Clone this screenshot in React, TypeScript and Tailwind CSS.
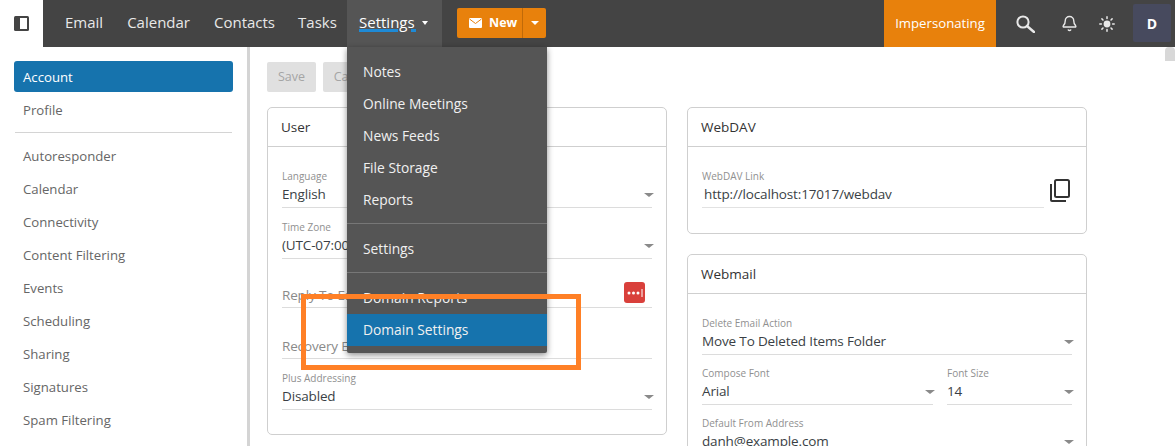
import React from "react";
import { Bell } from "lucide-react";

const font = "font-['Open_Sans','Noto_Sans',sans-serif]";

const sideTop = ["Autoresponder", "Calendar", "Connectivity", "Content Filtering", "Events", "Scheduling", "Sharing", "Signatures", "Spam Filtering"];

const Caret = () => <span className="absolute right-[-2px] top-[25px] h-0 w-0 border-x-[5px] border-t-[4px] border-x-transparent border-t-[#8a8a8a]" />;

const Field = ({ label, value, select = true, className = "" }: { label: string; value: string; select?: boolean; className?: string }) => (
  <div className={`relative h-[40px] border-b border-[#dcdcdc] ${className}`}>
    <div className="h-[15px] text-[10px] leading-[17px] text-[#909090]">{label}</div>
    <div className="h-[24px] whitespace-nowrap text-[13.5px] leading-[22px] tracking-[-0.15px] text-[#3a3f45]">{value}</div>
    {select && <Caret />}
  </div>
);

const Empty = ({ label, className = "" }: { label: string; className?: string }) => (
  <div className={`h-[29px] border-b border-[#dcdcdc] pt-[5px] text-[13.5px] leading-[22px] tracking-[-0.15px] text-[#8a8a8a] ${className}`}>{label}</div>
);

const Card = ({ title, children, className = "" }: { title: string; children: React.ReactNode; className?: string }) => (
  <section className={`rounded-[5px] border border-[#cfcfcf] bg-white ${className}`}>
    <h3 className="h-[39px] border-b border-[#cfcfcf] px-[13px] text-[13.5px] font-normal leading-[38px] text-[#333]">{title}</h3>
    {children}
  </section>
);

const MenuItem = ({ label, active = false }: { label: string; active?: boolean }) => (
  <div className={`h-[32px] px-[16px] text-[13.8px] font-medium leading-[31px] text-[#f0f0f0] ${active ? "bg-[#1673ad]" : ""}`}>{label}</div>
);

export default function App() {
  return (
    <div className={`relative h-[446px] w-[1175px] overflow-hidden bg-white ${font}`}>
      {/* top bar */}
      <header className="flex h-[47px] items-stretch bg-[#444444]">
        <div className="flex w-[43px] items-center justify-center bg-white">
          <svg width="15" height="15" viewBox="0 0 15 15">
            <rect x="0" y="0" width="15" height="15" rx="1.5" fill="#444" />
            <rect x="6" y="2" width="7" height="11" fill="#fff" />
          </svg>
        </div>
        <nav className="flex pl-[22px] text-[15px] text-[#e8e8e8]">
          <span className="mr-[24px] leading-[45px]">Email</span>
          <span className="mr-[24px] leading-[45px]">Calendar</span>
          <span className="mr-[23px] leading-[45px]">Contacts</span>
          <span className="mr-[10px] w-[39px] leading-[45px]">Tasks</span>
          <div className="flex w-[95px] bg-[#555555] pl-[12px]">
            <span className="relative h-[32px] leading-[45px] text-white">
              Settings
              <span className="absolute left-0 top-[29px] h-[3px] w-[39px] bg-[#1e8ad6]" />
              <span className="absolute left-[52px] top-[29px] h-[3px] w-[5px] bg-[#1e8ad6]" />
            </span>
            <span className="ml-[7px] mt-[21px] h-0 w-0 border-x-[3.5px] border-t-[4px] border-x-transparent border-t-white" />
          </div>
        </nav>
        <div className="ml-[15px] mt-[8px] flex h-[30px] w-[89px] rounded-[2px] bg-[#e8810c] text-white">
          <div className="flex w-[65px] items-center pl-[12px] text-[12.5px] font-bold">
            <svg width="13" height="10" viewBox="0 0 13 10" className="mr-[7px] shrink-0">
              <rect width="13" height="10" rx="1" fill="#fff" />
              <path d="M0.5 1 6.5 5.5 12.5 1" fill="none" stroke="#e8810c" strokeWidth="1" />
            </svg>
            New
          </div>
          <div className="flex flex-1 items-center justify-center border-l border-[#c06a08]">
            <span className="h-0 w-0 border-x-[4px] border-t-[4px] border-x-transparent border-t-white" />
          </div>
        </div>
        <div className="ml-auto flex items-stretch">
          <div className="flex w-[112px] items-center justify-center bg-[#e8810c] text-[13.2px] text-white">Impersonating</div>
          <div className="flex w-[58px] items-center justify-center">
            <svg width="19" height="18" viewBox="0 0 19 18" fill="none" stroke="#e8e8e8">
              <circle cx="7" cy="7" r="5.6" strokeWidth="2" />
              <path d="M11 11l7 6" strokeWidth="2.4" strokeLinecap="round" />
            </svg>
          </div>
          <div className="flex w-[30px] items-center justify-center text-[#e8e8e8]">
            <Bell size={17} strokeWidth={2} />
          </div>
          <div className="flex w-[45px] items-center justify-center">
            <svg width="16" height="16" viewBox="0 0 16 16" stroke="#e8e8e8" strokeWidth="1.5" strokeLinecap="round">
              <circle cx="8" cy="8" r="3.4" fill="#e8e8e8" stroke="none" />
              <path d="M8 .8v1.6M8 13.6v1.6M.8 8h1.6M13.6 8h1.6M2.9 2.9 4 4M12 12l1.1 1.1M2.9 13.1 4 12M12 4l1.1-1.1" />
            </svg>
          </div>
          <div className="mx-[4px] mb-[5px] mt-[4px] flex w-[38px] items-center justify-center rounded-[2px] bg-[#474a5e] text-[14px] font-bold text-white">D</div>
        </div>
      </header>

      <div className="flex h-[399px]">
        {/* sidebar */}
        <aside className="w-[247px] shrink-0 px-[14px] pt-[14px]">
          <div className="h-[31px] rounded-[3px] bg-[#1673ad] px-[9px] text-[13.2px] leading-[33px] text-white">Account</div>
          <div className="mb-[7px] h-[33px] px-[9px] text-[13.2px] leading-[37px] text-[#666]">Profile</div>
          <div className="mx-[1px] mb-[7px] border-t border-[#d4d4d4]" />
          {sideTop.map((s) => (
            <div key={s} className="h-[33px] px-[9px] text-[13.2px] leading-[33px] text-[#666]">{s}</div>
          ))}
        </aside>
        <div className="w-[3px] shrink-0 bg-[#d4d4d4]" />

        {/* main */}
        <main className="flex-1 pl-[17px] pt-[15px]">
          <div className="mb-[15px] flex gap-[7px]">
            <div className="h-[30px] w-[49px] rounded-[2px] bg-[#e0e0e0] text-center text-[12.5px] leading-[30px] text-[#a5a5a5]">Save</div>
            <div className="h-[30px] w-[60px] rounded-[2px] bg-[#e0e0e0] text-center text-[12.5px] leading-[30px] text-[#a5a5a5]">Cancel</div>
          </div>
          <div className="grid grid-cols-[400px_400px] gap-x-[20px]">
            <Card title="User" className="h-[328px]">
              <div className="px-[14px] pt-[21px]">
                <Field label="Language" value="English" />
                <Field label="Time Zone" value="(UTC-07:00) Mountain Time" className="mt-[11px]" />
                <Empty label="Reply To Email" className="mt-[20px]" />
                <Empty label="Recovery Email" className="mt-[22px]" />
                <Field label="Plus Addressing" value="Disabled" className="mt-[11px]" />
              </div>
            </Card>
            <div>
              <Card title="WebDAV" className="h-[127px]">
                <div className="flex px-[14px] pt-[21px]">
                  <div className="h-[40px] w-[342px] border-b border-[#e2e2e2]">
                    <div className="h-[15px] text-[10px] leading-[17px] text-[#909090]">WebDAV Link</div>
                    <div className="pl-[2px] text-[13.5px] leading-[22px] tracking-[-0.15px] text-[#3a3f45]">http://localhost:17017/webdav</div>
                  </div>
                  <svg width="22" height="25" viewBox="0 0 22 25" className="ml-[5px] mt-[10px]" fill="none" stroke="#333" strokeWidth="2">
                    <rect x="6" y="2" width="14" height="17" rx="1.5" />
                    <path d="M2 6v16a1 1 0 0 0 1 1h14" />
                  </svg>
                </div>
              </Card>
              <Card title="Webmail" className="mt-[20px] h-[300px]">
                <div className="px-[14px] pt-[21px]">
                  <Field label="Delete Email Action" value="Move To Deleted Items Folder" />
                  <div className="mt-[10px] flex gap-[14px]">
                    <Field label="Compose Font" value="Arial" className="w-[231px]" />
                    <Field label="Font Size" value="14" className="w-[125px]" />
                  </div>
                  <Field label="Default From Address" value="danh@example.com" className="mt-[10px]" />
                </div>
              </Card>
            </div>
          </div>
        </main>
      </div>

      {/* red password manager badge */}
      <div className="absolute left-[624px] top-[282px] flex h-[21px] w-[21px] items-center justify-center rounded-[3px] bg-[#d9403b]">
        <svg width="16" height="8" viewBox="0 0 16 8" fill="#fff">
          <circle cx="2" cy="4" r="1.5" />
          <circle cx="6.5" cy="4" r="1.5" />
          <circle cx="11" cy="4" r="1.5" />
          <rect x="14.5" y="0" width="1" height="8" />
        </svg>
      </div>

      {/* settings dropdown */}
      <div className="absolute left-[347px] top-[47px] h-[306px] w-[200px] rounded-b-[2px] bg-[#555555] pt-[9px] shadow-[0_2px_6px_rgba(0,0,0,0.45)]">
        <MenuItem label="Notes" />
        <MenuItem label="Online Meetings" />
        <MenuItem label="News Feeds" />
        <MenuItem label="File Storage" />
        <MenuItem label="Reports" />
        <div className="my-[7px] border-t border-[#777]" />
        <div className="mt-[9px]"><MenuItem label="Settings" /></div>
        <div className="my-[7px] border-t border-[#777]" />
        <div className="mt-[9px]"><MenuItem label="Domain Reports" /></div>
        <MenuItem label="Domain Settings" active />
      </div>

      {/* annotation */}
      <div className="absolute left-[301px] top-[294px] h-[76px] w-[280px] border-[5px] border-[#ff8026]" />

      {/* scrollbar thumb */}
      <div className="absolute right-0 top-[47px] h-[14px] w-[10px] rounded-t-[4px] bg-[#d8d8d8]" />
    </div>
  );
}
